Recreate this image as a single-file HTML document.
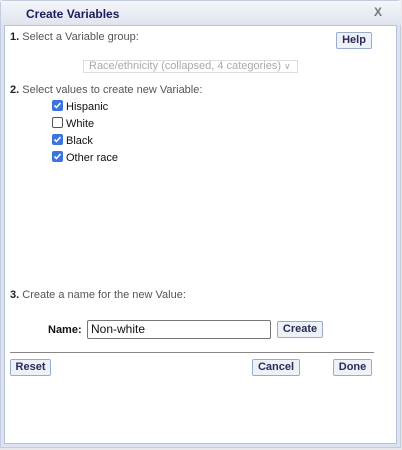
<!DOCTYPE html>
<html><head><style>
*{margin:0;padding:0;box-sizing:border-box}
body{width:402px;height:450px;background:#e8e8ec;position:relative;overflow:hidden;font-family:"Liberation Sans",Arial,sans-serif;font-size:11px}
.frame{position:absolute;left:0;top:0;width:401px;height:448px;background:#dce2f2;border:1px solid #c4cce0;border-radius:4px 4px 0 0}
.title{position:absolute;left:1px;top:1px;right:1px;height:24px;background:linear-gradient(#f4f6fa,#dfe4ee);}
.title span{position:absolute;left:25px;top:6px;font-weight:bold;font-size:12px;color:#1c1c5a}
.x{position:absolute;left:374px;top:5px;font-weight:bold;font-size:12px;color:#777}
.content{position:absolute;left:4px;top:25px;width:393px;height:419px;background:#fff;border:1px solid #b6c2dc}
.t{position:absolute;color:#555;font-size:11px}
.t b{color:#222}
.btn{position:absolute;height:16px;background:#eef1f8;border:1px solid #9aaccc;border-radius:2px;font-weight:bold;font-size:11px;color:#2a2a5a;text-align:center;line-height:14px}
.cb{position:absolute;left:52px;width:11px;height:11px;border-radius:2px;background:#3b74e0;}
.cb.off{background:#fff;border:1px solid #555}
.cb svg{position:absolute;left:1px;top:1px}
.lab{position:absolute;left:66px;color:#111;font-size:11px}
</style></head><body>
<div class="frame"></div>
<div class="title"><span>Create Variables</span></div>
<div class="x">X</div>
<div class="content"></div>
<div class="t" style="left:10px;top:31px"><b>1.</b> Select a Variable group:</div>
<div class="btn" style="left:336px;top:32px;width:36px;height:17px;line-height:15px">Help</div>
<div style="position:absolute;left:83px;top:60px;width:215px;height:13px;border:1px solid #ddd;color:#aaa;font-size:11px;line-height:11px;padding-left:5px">Race/ethnicity (collapsed, 4 categories) <span style="font-size:9px">&#8744;</span></div>
<div class="t" style="left:10px;top:84px"><b>2.</b> Select values to create new Variable:</div>
<div class="cb" style="top:100px"><svg width="9" height="9"><path d="M1.5 4.5L3.5 6.5L7.5 2" stroke="#fff" stroke-width="1.6" fill="none"/></svg></div>
<div class="lab" style="top:101px">Hispanic</div>
<div class="cb off" style="top:117px"></div>
<div class="lab" style="top:118px">White</div>
<div class="cb" style="top:134px"><svg width="9" height="9"><path d="M1.5 4.5L3.5 6.5L7.5 2" stroke="#fff" stroke-width="1.6" fill="none"/></svg></div>
<div class="lab" style="top:135px">Black</div>
<div class="cb" style="top:151px"><svg width="9" height="9"><path d="M1.5 4.5L3.5 6.5L7.5 2" stroke="#fff" stroke-width="1.6" fill="none"/></svg></div>
<div class="lab" style="top:152px">Other race</div>
<div class="t" style="left:10px;top:289px"><b>3.</b> Create a name for the new Value:</div>
<div style="position:absolute;left:48px;top:324px;font-weight:bold;color:#111">Name:</div>
<div style="position:absolute;left:87px;top:320px;width:184px;height:19px;border:1px solid #777;border-radius:2px;font-size:12px;color:#111;padding-left:3px;line-height:17px">Non-white</div>
<div class="btn" style="left:277px;top:321px;width:46px;height:17px;line-height:15px">Create</div>
<div style="position:absolute;left:10px;top:352px;width:364px;height:1px;background:#888"></div>
<div class="btn" style="left:10px;top:359px;width:41px;height:17px;line-height:15px">Reset</div>
<div class="btn" style="left:252px;top:359px;width:48px;height:17px;line-height:15px">Cancel</div>
<div class="btn" style="left:333px;top:359px;width:39px;height:17px;line-height:15px">Done</div>
</body></html>
